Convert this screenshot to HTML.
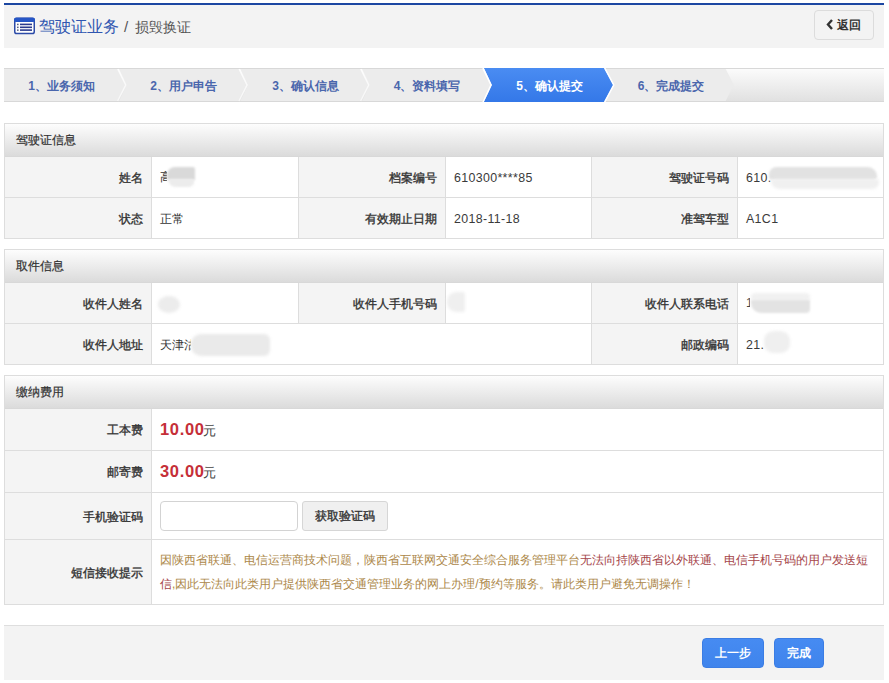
<!DOCTYPE html>
<html><head><meta charset="utf-8">
<style>
*{box-sizing:border-box;margin:0;padding:0}
html,body{width:889px;height:683px;overflow:hidden;background:#fff}
body{font-family:"Liberation Sans",sans-serif;font-size:12px;color:#333;position:relative}
.a{position:absolute}
.pan{left:4px;width:880px;border:1px solid #dddddd;background:#fff}
.ph{left:5px;width:878px;height:33px;line-height:32px;padding-left:11px;font-size:12px;font-weight:normal;-webkit-text-stroke:0.2px #333;color:#333;background:linear-gradient(#fdfdfd,#dbdbdb);border-bottom:1px solid #d8d8d8}
.lab{background:#f4f4f4;text-align:right;padding-right:8px;font-weight:normal;-webkit-text-stroke:0.35px #333;color:#333;border-right:1px solid #dddddd;white-space:nowrap}
.val{background:#fff;padding-left:8px;color:#333;border-right:1px solid #dddddd;white-space:nowrap}
.num{font-size:12.4px;letter-spacing:0.35px;color:#3a3a3a}
.hl{left:5px;width:878px;height:1px;background:#dddddd}
.stt{top:69px;width:120px;height:34px;line-height:34px;text-align:center;font-weight:bold;font-size:12px}
.money{color:#c52f38;font-weight:bold;font-size:16.5px;letter-spacing:0.65px;margin-right:-1.5px;position:relative;top:-1px}
.yuan{font-size:13px;color:#444;position:relative;top:-1px}
.btn{top:638px;height:30px;line-height:29px;border-radius:4px;background:linear-gradient(#468bf2,#3f84ec);color:#fff;font-weight:bold;font-size:12px;text-align:center;border:1px solid #3b7de4}
</style></head>
<body>
<div class="a" style="left:4px;top:3px;width:880px;height:2px;background:#1c47a2"></div>
<div class="a" style="left:4px;top:5px;width:880px;height:43px;background:#f3f3f3"></div>
<svg class="a" style="left:14px;top:17px" width="21" height="18" viewBox="0 0 21 18">
<rect x="0.75" y="1.35" width="19.5" height="15.2" rx="1.8" fill="#fff" stroke="#2c4ba8" stroke-width="1.5"/>
<rect x="0.1" y="0.7" width="20.8" height="4.2" rx="1.6" fill="#2656c6"/>
<rect x="3" y="6.7" width="1.6" height="1.5" fill="#5a6280"/><rect x="6" y="6.6" width="12" height="1.6" fill="#2b3b8e"/>
<rect x="3" y="9.6" width="1.6" height="1.5" fill="#5a6280"/><rect x="6" y="9.5" width="12" height="1.6" fill="#2b3b8e"/>
<rect x="3" y="12.4" width="1.6" height="1.5" fill="#5a6280"/><rect x="6" y="12.3" width="12" height="1.6" fill="#2b3b8e"/>
</svg>
<div class="a" style="left:39px;top:17px;font-size:16px;line-height:20px;color:#2f56b0;white-space:nowrap">驾驶证业务</div>
<div class="a" style="left:124px;top:17px;font-size:15px;line-height:20px;color:#555;white-space:nowrap">/</div>
<div class="a" style="left:135px;top:17px;font-size:14px;line-height:20px;color:#555;white-space:nowrap">损毁换证</div>
<div class="a" style="left:814px;top:10px;width:60px;height:30px;border:1px solid #dcdcdc;border-radius:4px;background:#f3f3f3"></div>
<svg class="a" style="left:826px;top:19px" width="8" height="11" viewBox="0 0 8 11"><polyline points="6,1 2,5.5 6,10" fill="none" stroke="#333" stroke-width="2.4"/></svg>
<div class="a" style="left:837px;top:15px;font-size:12px;line-height:20px;font-weight:bold;color:#333">返回</div>
<svg class="a" style="left:4px;top:68px" width="880" height="34" viewBox="0 0 880 34">
<defs>
<linearGradient id="bg" x1="0" y1="0" x2="0" y2="1"><stop offset="0" stop-color="#fcfcfc"/><stop offset="1" stop-color="#e0e0e0"/></linearGradient>
<linearGradient id="bl" x1="0" y1="0" x2="0" y2="1"><stop offset="0" stop-color="#4a8cf2"/><stop offset="1" stop-color="#3478e8"/></linearGradient>
</defs>
<rect x="0" y="0" width="880" height="34" fill="url(#bg)"/>
<rect x="0" y="0" width="880" height="1" fill="#d8d8d8"/>
<rect x="0" y="33" width="880" height="1" fill="#d8d8d8"/>
<polygon points="0,1 113.5,1 121.5,17 113.5,33 0,33" fill="#ececec"/>
<polygon points="115.0,1 234.8,1 242.8,17 234.8,33 115.0,33 123.0,17" fill="#ececec"/>
<polygon points="236.3,1 356.5,1 364.5,17 356.5,33 236.3,33 244.3,17" fill="#ececec"/>
<polygon points="358.0,1 478.3,1 486.3,17 478.3,33 358.0,33 366.0,17" fill="#ececec"/>
<polygon points="479.8,0 600,0 609.5,17 600,34 479.8,34 487.8,17" fill="url(#bl)"/>
<polygon points="601.5,1 721.7,1 729.7,17 721.7,33 601.5,33 609.5,17" fill="#ececec"/>
<polyline points="113.7,1 121.7,17 113.7,33" fill="none" stroke="rgba(255,255,255,0.7)" stroke-width="1.4"/>
<polyline points="235.0,1 243.0,17 235.0,33" fill="none" stroke="rgba(255,255,255,0.7)" stroke-width="1.4"/>
<polyline points="356.7,1 364.7,17 356.7,33" fill="none" stroke="rgba(255,255,255,0.7)" stroke-width="1.4"/>
<polyline points="479.0,0 487.0,17 479.0,34" fill="none" stroke="#fff" stroke-width="1.6"/>
<polyline points="600.7,0 609.7,17 600.7,34" fill="none" stroke="#fff" stroke-width="1.6"/>
</svg>
<div class="a stt" style="left:1.5px;color:#4a66ad">1、业务须知</div><div class="a stt" style="left:123.5px;color:#4a66ad">2、用户申告</div><div class="a stt" style="left:245.5px;color:#4a66ad">3、确认信息</div><div class="a stt" style="left:367px;color:#4a66ad">4、资料填写</div><div class="a stt" style="left:489.5px;color:#fff">5、确认提交</div><div class="a stt" style="left:611px;color:#4a66ad">6、完成提交</div>
<div class="a pan" style="top:123px;height:116px"></div>
<div class="a ph" style="top:124px">驾驶证信息</div>
<div class="a lab" style="left:5px;top:157px;width:147px;height:40px;line-height:40px;padding-top:1px;">姓名</div>
<div class="a val" style="left:152px;top:157px;width:147px;height:40px;line-height:40px;padding-top:1px;"></div>
<div class="a lab" style="left:299px;top:157px;width:147px;height:40px;line-height:40px;padding-top:1px;">档案编号</div>
<div class="a val" style="left:446px;top:157px;width:146px;height:40px;line-height:40px;padding-top:1px;"><span class="num">610300****85</span></div>
<div class="a lab" style="left:592px;top:157px;width:146px;height:40px;line-height:40px;padding-top:1px;">驾驶证号码</div>
<div class="a val" style="left:738px;top:157px;width:146px;height:40px;line-height:40px;padding-top:1px;"><span class="num">610.</span></div>
<div class="a hl" style="top:197px"></div>
<div class="a lab" style="left:5px;top:198px;width:147px;height:40px;line-height:40px;padding-top:1px;">状态</div>
<div class="a val" style="left:152px;top:198px;width:147px;height:40px;line-height:40px;padding-top:1px;">正常</div>
<div class="a lab" style="left:299px;top:198px;width:147px;height:40px;line-height:40px;padding-top:1px;">有效期止日期</div>
<div class="a val" style="left:446px;top:198px;width:146px;height:40px;line-height:40px;padding-top:1px;"><span class="num">2018-11-18</span></div>
<div class="a lab" style="left:592px;top:198px;width:146px;height:40px;line-height:40px;padding-top:1px;">准驾车型</div>
<div class="a val" style="left:738px;top:198px;width:146px;height:40px;line-height:40px;padding-top:1px;"><span class="num">A1C1</span></div>
<div class="a hl" style="top:238px"></div>
<div class="a pan" style="top:249px;height:116px"></div>
<div class="a ph" style="top:250px">取件信息</div>
<div class="a lab" style="left:5px;top:283px;width:147px;height:40px;line-height:40px;padding-top:1px;">收件人姓名</div>
<div class="a val" style="left:152px;top:283px;width:147px;height:40px;line-height:40px;padding-top:1px;"></div>
<div class="a lab" style="left:299px;top:283px;width:147px;height:40px;line-height:40px;padding-top:1px;">收件人手机号码</div>
<div class="a val" style="left:446px;top:283px;width:146px;height:40px;line-height:40px;padding-top:1px;"></div>
<div class="a lab" style="left:592px;top:283px;width:146px;height:40px;line-height:40px;padding-top:1px;">收件人联系电话</div>
<div class="a val" style="left:738px;top:283px;width:146px;height:40px;line-height:40px;padding-top:1px;"></div>
<div class="a hl" style="top:323px"></div>
<div class="a lab" style="left:5px;top:324px;width:147px;height:40px;line-height:40px;padding-top:1px;">收件人地址</div>
<div class="a val" style="left:152px;top:324px;width:440px;height:40px;line-height:40px;padding-top:1px;">天津</div>
<div class="a lab" style="left:592px;top:324px;width:146px;height:40px;line-height:40px;padding-top:1px;">邮政编码</div>
<div class="a val" style="left:738px;top:324px;width:146px;height:40px;line-height:40px;padding-top:1px;"><span class="num">21.</span></div>
<div class="a hl" style="top:364px"></div>
<div class="a pan" style="top:375px;height:230px"></div>
<div class="a ph" style="top:376px">缴纳费用</div>
<div class="a lab" style="left:5px;top:409px;width:147px;height:41px;line-height:41px;padding-top:1px;">工本费</div>
<div class="a val" style="left:152px;top:409px;width:732px;height:41px;line-height:41px;padding-top:1px;"><span class="money">10.00</span><span class="yuan">元</span></div>
<div class="a hl" style="top:450px"></div>
<div class="a lab" style="left:5px;top:451px;width:147px;height:41px;line-height:41px;padding-top:1px;">邮寄费</div>
<div class="a val" style="left:152px;top:451px;width:732px;height:41px;line-height:41px;padding-top:1px;"><span class="money">30.00</span><span class="yuan">元</span></div>
<div class="a hl" style="top:492px"></div>
<div class="a lab" style="left:5px;top:493px;width:147px;height:46px;line-height:46px;padding-top:1px;">手机验证码</div>
<div class="a val" style="left:152px;top:493px;width:732px;height:46px;line-height:46px;padding-top:1px;"></div>
<div class="a hl" style="top:539px"></div>
<div class="a lab" style="left:5px;top:540px;width:147px;height:64px;line-height:64px;padding-top:1px;">短信接收提示</div>
<div class="a val" style="left:152px;top:540px;width:732px;height:64px;line-height:64px;padding-top:1px;"></div>
<div class="a hl" style="top:604px"></div>
<div class="a" style="left:160px;top:168px;width:7px;height:18px;overflow:hidden;font-size:12px;line-height:18px;color:#333">高</div><div class="a" style="left:167px;top:167px;width:28px;height:13px;background:#d9d9d9;filter:blur(0.8px);border-radius:8px 2px 0 0;"></div><div class="a" style="left:168px;top:179px;width:26px;height:8px;background:#ececec;filter:blur(1.2px);border-radius:0 0 6px 10px;"></div><div class="a" style="left:769px;top:167px;width:108px;height:13px;background:#e2e2e2;filter:blur(1.2px);border-radius:8px 10px 4px 4px;"></div><div class="a" style="left:771px;top:179px;width:108px;height:10px;background:#f0f0f0;filter:blur(1.4px);border-radius:2px 2px 8px 10px;"></div><div class="a" style="left:158px;top:296px;width:22px;height:17px;background:#ececec;filter:blur(1.5px);border-radius:50%;"></div><div class="a" style="left:447px;top:292px;width:18px;height:20px;background:#efefef;filter:blur(1.5px);border-radius:50% 10% 10% 50%;"></div><div class="a" style="left:746px;top:294px;width:4px;height:18px;overflow:hidden;font-size:12px;line-height:18px;color:#444">1</div><div class="a" style="left:751px;top:293px;width:59px;height:8px;background:#f1f1f1;filter:blur(1.5px);border-radius:6px;"></div><div class="a" style="left:751px;top:300px;width:59px;height:13px;background:#e3e3e3;filter:blur(1.2px);border-radius:0 0 4px 10px;"></div><div class="a" style="left:184px;top:336px;width:7px;height:18px;overflow:hidden;font-size:12px;line-height:18px;color:#333">沽</div><div class="a" style="left:191px;top:334px;width:79px;height:22px;background:#eaeaea;filter:blur(1.8px);border-radius:10px 6px 6px 10px;"></div><div class="a" style="left:764px;top:331px;width:26px;height:22px;background:#efefef;filter:blur(1.6px);border-radius:40%;"></div>
<div class="a" style="left:160px;top:501px;width:138px;height:30px;border:1px solid #d3d3d3;border-radius:4px;background:#fff"></div>
<div class="a" style="left:302px;top:501px;width:86px;height:30px;border:1px solid #d6d6d6;border-radius:3px;background:#f0f0f0;line-height:28px;text-align:center;font-weight:normal;font-size:12px;-webkit-text-stroke:0.35px #333;color:#333">获取验证码</div>
<div class="a" style="left:160px;top:548px;width:720px;font-size:12px;line-height:24px"><span style="color:#ac8748">因陕西省联通、电信运营商技术问题，陕西省互联网交通安全综合服务管理平台</span><span style="color:#a5454a">无法向持陕西省以外联通、电信手机号码的用户发送短信</span><span style="color:#ac8748">,因此无法向此类用户提供陕西省交通管理业务的网上办理/预约等服务。请此类用户避免无调操作！</span></div>
<div class="a" style="left:4px;top:625px;width:880px;height:55px;background:#f3f3f3;border-top:1px solid #dedede"></div>
<div class="a btn" style="left:702px;width:62px">上一步</div>
<div class="a btn" style="left:774px;width:50px">完成</div>
</body></html>
